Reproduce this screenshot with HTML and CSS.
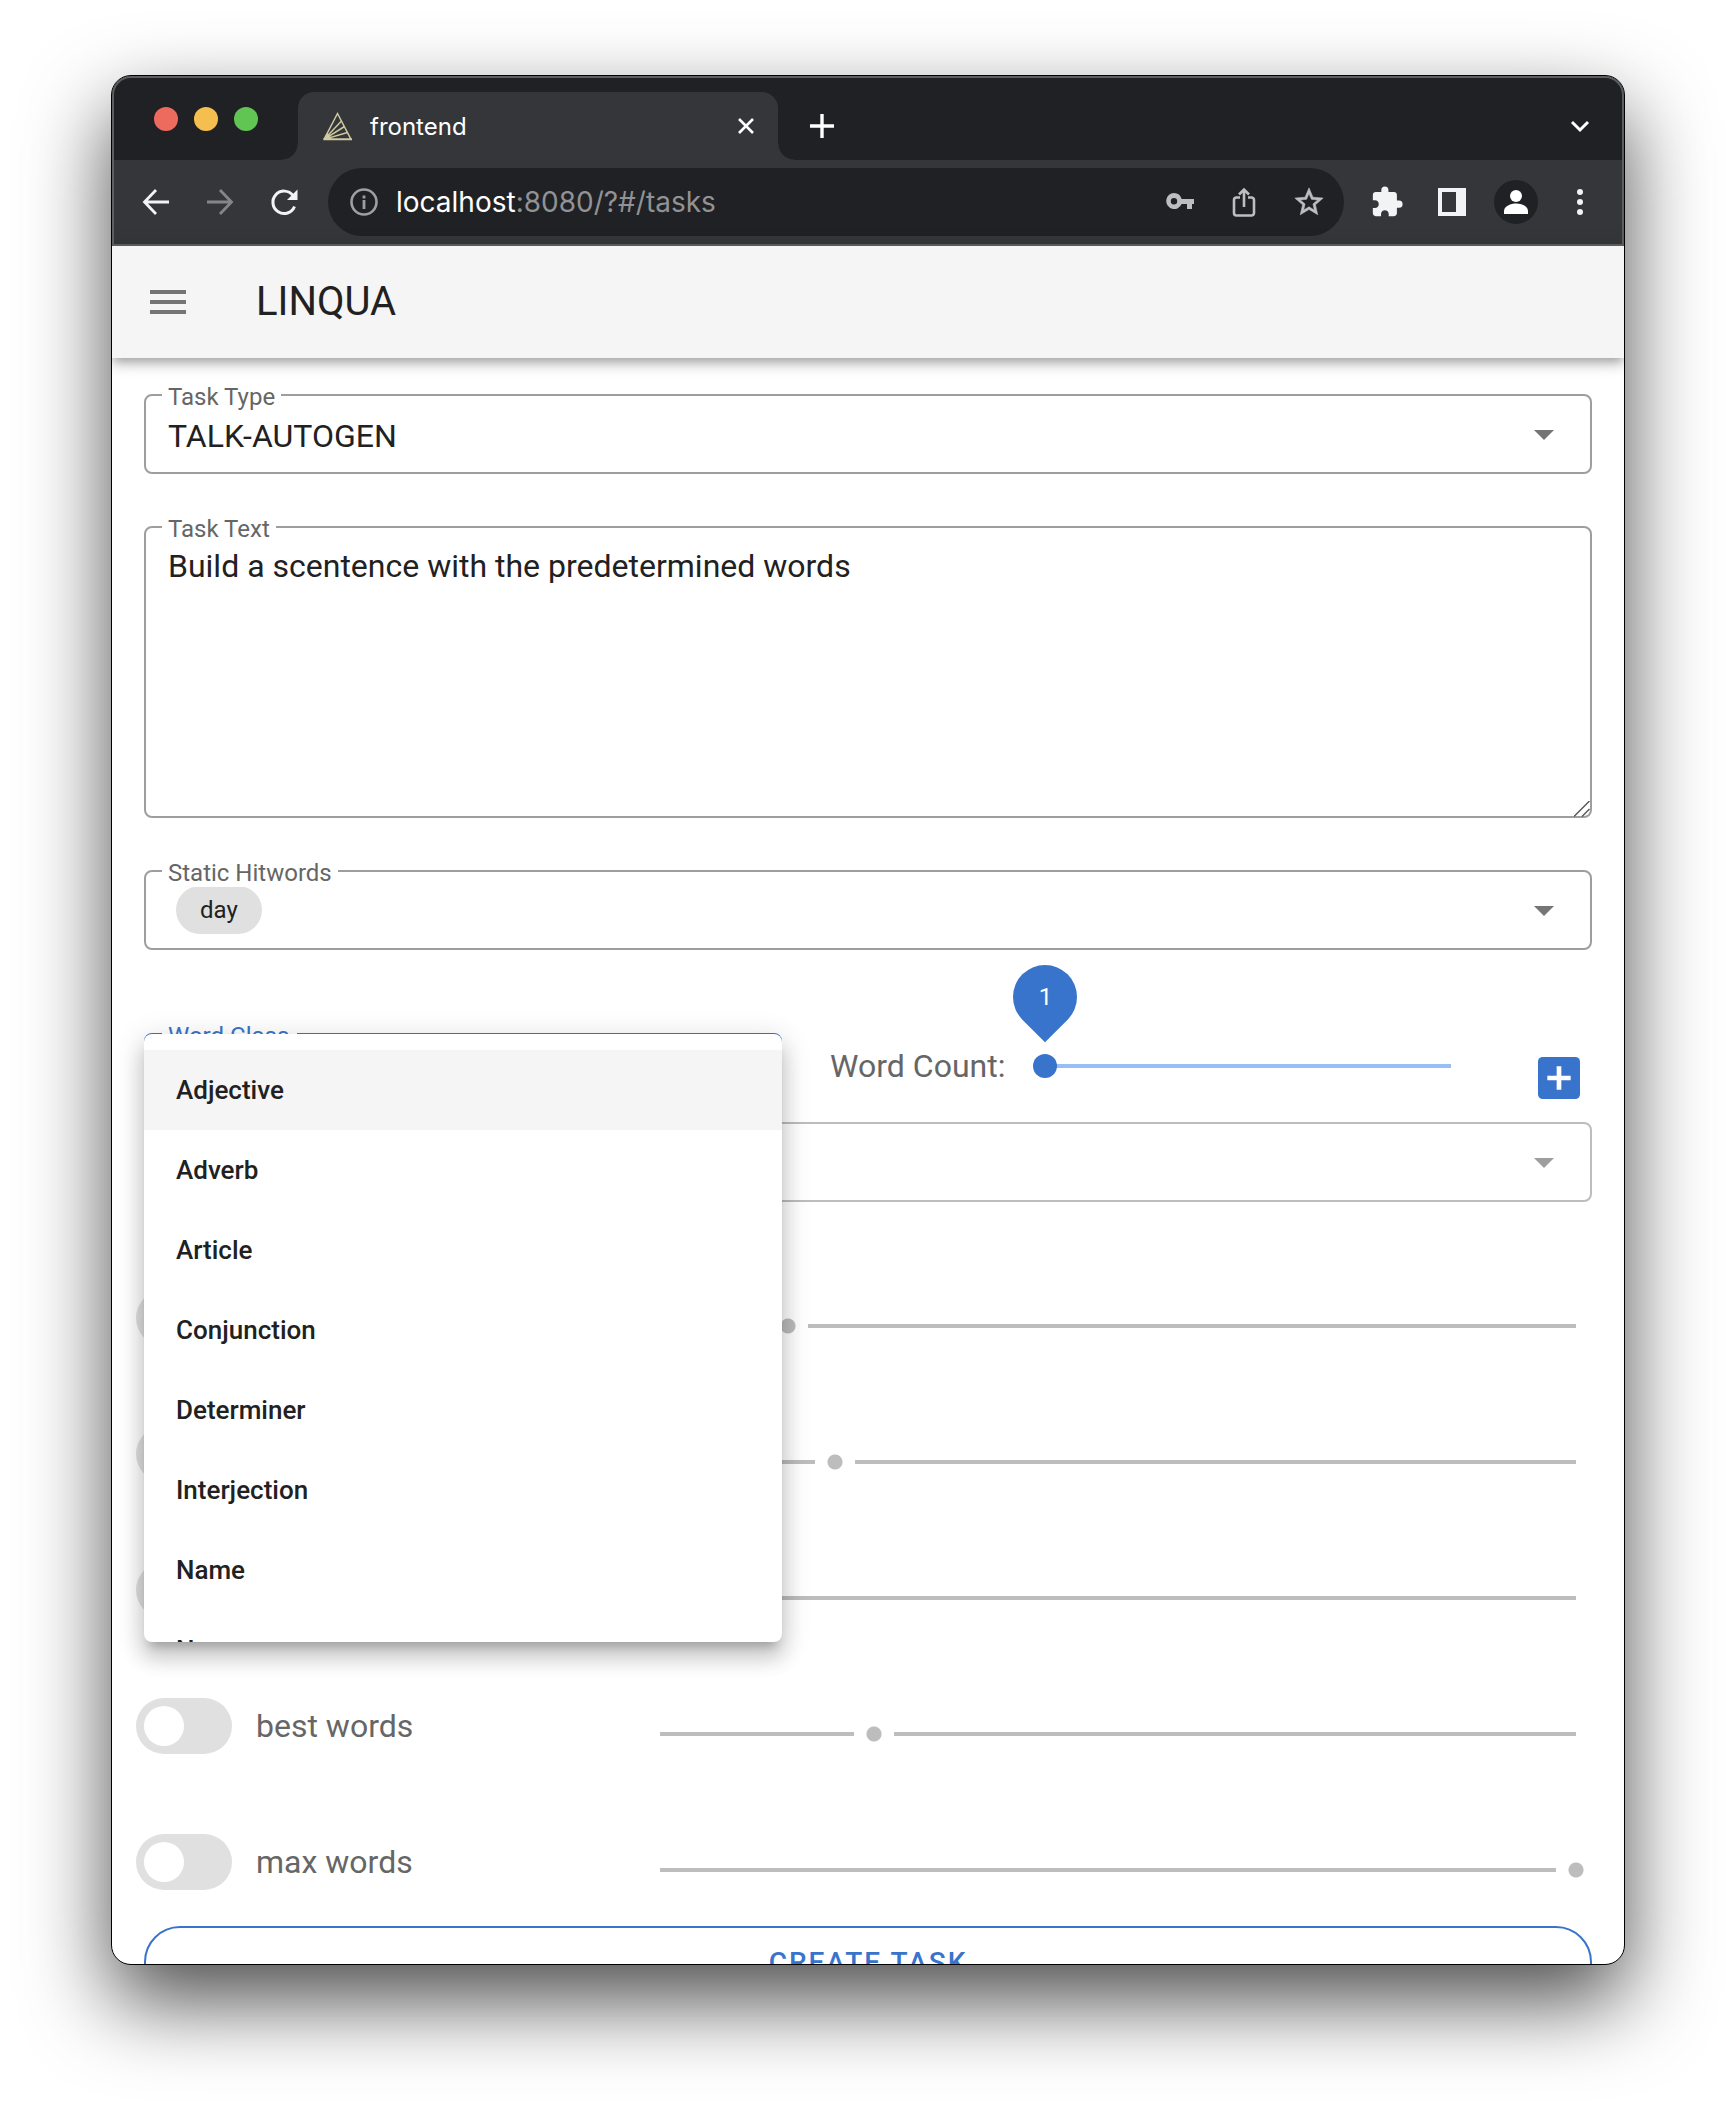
FILE: index.html
```html
<!DOCTYPE html>
<html lang="en">
<head>
<meta charset="utf-8">
<title>frontend</title>
<link rel="stylesheet" href="styles.css">
</head>
<body>
<div class="window">
  <header class="chrome">
    <div class="tabstrip">
      <div class="lights">
        <span class="light light-close"></span>
        <span class="light light-min"></span>
        <span class="light light-max"></span>
      </div>
      <div class="tab">
        <svg class="favicon" viewBox="0 0 32 32" aria-hidden="true"><g fill="none" stroke="#cfc8a0" stroke-width="1.5"><path d="M2 29.400 15.500 3.500 29 29.400"/><path d="M2 29.400 19.500 11M2 29.400 22.500 16.500M2 29.400 25.500 22.500"/><path d="M1.500 29.200h28.500" stroke-width="2"/></g><path d="M1.500 30 5.500 23 9 27.500 9 30Z" fill="#cfc8a0"/></svg>
        <span class="tab-title">frontend</span>
        <button class="icon-btn" aria-label="Close tab"><svg width="24" height="24" viewBox="0 0 24 24"><path d="m5 5 14 14M19 5 5 19" fill="none" stroke="#fff" stroke-width="2.6"/></svg></button>
      </div>
      <button class="icon-btn new-tab" aria-label="New tab"><svg width="28" height="28" viewBox="0 0 28 28"><path d="M14 2v24M2 14h24" fill="none" stroke="#fff" stroke-width="3.4"/></svg></button>
      <button class="icon-btn tab-search" aria-label="Search tabs"><svg width="24" height="24" viewBox="0 0 24 24"><path d="m4 8 8 8 8-8" fill="none" stroke="#fff" stroke-width="3"/></svg></button>
    </div>
    <div class="toolbar">
      <button class="icon-btn" aria-label="Back"><svg width="32" height="32" viewBox="0 0 32 32"><path d="M29 16H5M16 4 4.500 16 16 28" fill="none" stroke="#f1f3f4" stroke-width="2.800"/></svg></button>
      <button class="icon-btn" aria-label="Forward"><svg width="32" height="32" viewBox="0 0 32 32"><path d="M3 16h24M16 4l11.500 12L16 28" fill="none" stroke="#85868a" stroke-width="2.800"/></svg></button>
      <button class="icon-btn" aria-label="Reload"><svg width="32" height="32" viewBox="0 0 32 32"><path d="M26.500 20.500A11.200 11.200 0 1 1 25 9.500" fill="none" stroke="#f1f3f4" stroke-width="3"/><path d="M29.500 3.500V14H19Z" fill="#f1f3f4"/></svg></button>
      <div class="omnibox">
        <svg class="info" width="32" height="32" viewBox="0 0 32 32" aria-hidden="true"><circle cx="16" cy="16" r="12.500" fill="none" stroke="#9aa0a6" stroke-width="2.600"/><path d="M16 14v9M16 9.500v3" stroke="#9aa0a6" stroke-width="2.800"/></svg>
        <span class="url"><span class="host">localhost</span>:8080/?#/tasks</span>
        <button class="icon-btn" aria-label="Passwords"><svg width="32" height="32" viewBox="0 0 32 32"><path fill="#bdbebf" fill-rule="evenodd" d="M10 7a8 8 0 1 0 7.600 11H23v5h5v-5h2v-5H17.600A8 8 0 0 0 10 7Zm0 5a3.200 3.200 0 1 1 0 6.400 3.200 3.200 0 0 1 0-6.400Z"/></svg></button>
        <button class="icon-btn" aria-label="Share"><svg width="32" height="32" viewBox="0 0 32 32"><path fill="none" stroke="#bdbebf" stroke-width="2.600" d="M12 11.500H8.500a2.500 2.500 0 0 0-2.500 2.500v13a2.500 2.500 0 0 0 2.500 2.500h15a2.500 2.500 0 0 0 2.500-2.500V14a2.500 2.500 0 0 0-2.500-2.500H20M16 21V4M11 8.500l5-5 5 5"/></svg></button>
        <button class="icon-btn" aria-label="Bookmark"><svg width="34" height="34" viewBox="0 0 24 24"><path fill="#bdbebf" stroke="#bdbebf" stroke-width="0.400" d="m22 9.240-7.190-.62L12 2 9.190 8.630 2 9.240l5.460 4.730L5.820 21 12 17.270 18.180 21l-1.630-7.030zM12 15.400l-3.760 2.270 1-4.280-3.320-2.880 4.380-.38L12 6.100l1.710 4.040 4.380.38-3.320 2.880 1 4.280z"/></svg></button>
      </div>
      <button class="icon-btn" aria-label="Extensions"><svg width="34" height="34" viewBox="0 0 24 24"><path fill="#f1f3f4" d="M20.500 11H19V7c0-1.100-.9-2-2-2h-4V3.500a2.500 2.500 0 0 0-5 0V5H4c-1.100 0-1.990.9-1.990 2v3.800H3.500c1.490 0 2.700 1.210 2.700 2.700s-1.210 2.700-2.700 2.700H2V20c0 1.100.9 2 2 2h3.800v-1.500c0-1.490 1.210-2.700 2.700-2.700s2.700 1.210 2.700 2.700V22H17c1.100 0 2-.9 2-2v-4h1.500a2.500 2.500 0 0 0 0-5"/></svg></button>
      <button class="icon-btn" aria-label="Side panel"><svg width="32" height="32" viewBox="0 0 32 32"><path fill="#f1f3f4" fill-rule="evenodd" d="M2 2h28v28H2ZM6 6v20h14V6Z"/></svg></button>
      <button class="icon-btn profile" aria-label="Profile"><svg width="44" height="44" viewBox="0 0 44 44"><circle cx="22" cy="22" r="22" fill="#202124"/><circle cx="22" cy="16" r="6" fill="#fff"/><path d="M10 34v-3c0-5 7-7.500 12-7.500S34 26 34 31v3Z" fill="#fff"/></svg></button>
      <button class="icon-btn" aria-label="Menu"><svg width="32" height="32" viewBox="0 0 32 32"><g fill="#f1f3f4"><circle cx="16" cy="6" r="3"/><circle cx="16" cy="16" r="3"/><circle cx="16" cy="26" r="3"/></g></svg></button>
    </div>
  </header>

  <div class="appbar">
    <button class="icon-btn nav-btn" aria-label="Open navigation"><svg width="48" height="48" viewBox="0 0 24 24"><path fill="#757575" d="M3 6h18v2H3zm0 5h18v2H3zm0 5h18v2H3z"/></svg></button>
    <h1 class="app-title">LINQUA</h1>
  </div>

  <main class="page">
    <form class="form">
      <div class="field">
        <label class="field-label" for="task-type">Task Type</label>
        <select class="control" id="task-type"><option>TALK-AUTOGEN</option></select>
        <span class="caret"></span>
      </div>

      <div class="field">
        <label class="field-label" for="task-text">Task Text</label>
        <textarea class="control control-area" id="task-text">Build a scentence with the predetermined words</textarea>
        <svg class="grip" viewBox="0 0 16 16" aria-hidden="true"><path d="M0 15.500 15.500 0M8 15.500 15.500 8" fill="none" stroke="#555" stroke-width="1.400"/></svg>
      </div>

      <div class="field">
        <label class="field-label" for="hitwords">Static Hitwords</label>
        <div class="control control-chips">
          <span class="chip">day</span>
          <input class="chip-input" id="hitwords" type="text">
        </div>
        <span class="caret"></span>
      </div>

      <div class="word-row">
        <div class="field field-active">
          <label class="field-label" for="word-class">Word Class</label>
          <select class="control" id="word-class"></select>
          <ul class="menu" role="listbox" aria-label="Word Class">
            <li class="option option-hover" role="option">Adjective</li>
            <li class="option" role="option">Adverb</li>
            <li class="option" role="option">Article</li>
            <li class="option" role="option">Conjunction</li>
            <li class="option" role="option">Determiner</li>
            <li class="option" role="option">Interjection</li>
            <li class="option" role="option">Name</li>
            <li class="option" role="option">Noun</li>
          </ul>
        </div>
        <div class="count">
          <label class="text" for="word-count">Word Count:</label>
          <div class="count-slider">
            <input class="range" id="word-count" type="range" min="1" max="10" value="1">
            <output class="pin" for="word-count"><span class="pin-value">1</span></output>
          </div>
        </div>
        <button class="icon-btn add-btn" type="button" aria-label="Add word class"><svg width="56" height="56" viewBox="0 0 24 24"><rect x="3" y="3" width="18" height="18" rx="2" fill="#3874cb"/><path d="M12 7v10M7 12h10" stroke="#fff" stroke-width="2"/></svg></button>
      </div>

      <div class="field field-disabled">
        <select class="control" id="dynamic-words" aria-label="Dynamic words" disabled></select>
        <span class="caret"></span>
      </div>

      <div class="limits">
        <div class="limit">
          <input class="switch" type="checkbox" aria-label="Enable first limit">
          <input class="range range-off" type="range" min="0" max="1000" value="140" disabled aria-label="First limit">
        </div>
        <div class="limit">
          <input class="switch" type="checkbox" aria-label="Enable second limit">
          <input class="range range-off" type="range" min="0" max="1000" value="191" disabled aria-label="Second limit">
        </div>
        <div class="limit">
          <input class="switch" type="checkbox" aria-label="Enable third limit">
          <input class="range range-off" type="range" min="0" max="1000" value="50" disabled aria-label="Third limit">
        </div>
        <div class="limit">
          <label class="text switch-label"><input class="switch" type="checkbox">best words</label>
          <input class="range range-off" type="range" min="0" max="1000" value="234" disabled aria-label="best words">
        </div>
        <div class="limit">
          <label class="text switch-label"><input class="switch" type="checkbox">max words</label>
          <input class="range range-off" type="range" min="0" max="1000" value="1000" disabled aria-label="max words">
        </div>
      </div>

      <button class="submit" type="button">CREATE TASK</button>
    </form>
  </main>
</div>
</body>
</html>
```

FILE: styles.css
```css
:root {
  --primary: #3874cb;
  --ink: #212121;
  --muted: #666;
  --line: #9e9e9e;
  --off: #bdbdbd;
}

* {
  box-sizing: border-box;
}

body {
  margin: 0;
  height: 100vh;
  padding: 75px 111px 147px;
  display: flex;
  background: #fff;
  color: var(--ink);
  font-family: Roboto, "Liberation Sans", sans-serif;
  font-size: 32px;
  overflow: hidden;
}

button,
select,
textarea,
input {
  margin: 0;
  font: inherit;
  color: inherit;
}

.window {
  flex: 1;
  min-width: 0;
  display: flex;
  flex-direction: column;
  border: 1px solid #000;
  border-radius: 20px;
  background: #fff;
  overflow: hidden;
  box-shadow: 0 36px 84px rgba(0, 0, 0, 0.7);
}

/* Browser chrome */

.chrome {
  position: relative;
  flex: none;
  background: #35363a;
  border-bottom: 2px solid #5f6164;
  font-family: Inter, "Liberation Sans", sans-serif;
}

.chrome::after {
  content: "";
  position: absolute;
  inset: 0 0 -2px;
  border: solid #5c5e60;
  border-width: 2px 2px 0;
  border-radius: 19px 19px 0 0;
  pointer-events: none;
}

.icon-btn {
  display: flex;
  align-items: center;
  justify-content: center;
  flex: none;
  padding: 0;
  border: 0;
  background: none;
}

.tabstrip {
  display: flex;
  align-items: center;
  height: 84px;
  padding: 16px 32px 0 42px;
  background: #202124;
}

.lights {
  display: flex;
  gap: 16px;
  margin-right: 40px;
  padding-bottom: 14px;
}

.light {
  width: 24px;
  height: 24px;
  border-radius: 50%;
}

.light-close { background: #ed6a5e; }
.light-min { background: #f5bf4f; }
.light-max { background: #61c554; }

.tab {
  position: relative;
  display: flex;
  align-items: center;
  width: 480px;
  height: 68px;
  padding: 0 20px 0 24px;
  border-radius: 16px 16px 0 0;
  background: #35363a;
}

.tab::before,
.tab::after {
  content: "";
  position: absolute;
  bottom: 0;
  width: 16px;
  height: 16px;
}

.tab::before {
  right: 100%;
  background: radial-gradient(circle at 0 0, transparent 15px, #35363a 16px);
}

.tab::after {
  left: 100%;
  background: radial-gradient(circle at 100% 0, transparent 15px, #35363a 16px);
}

.favicon {
  width: 32px;
  height: 32px;
  margin-right: 16px;
}

.tab-title {
  flex: 1;
  color: #fff;
  font-size: 24px;
}

.new-tab {
  margin-left: 30px;
}

.tab-search {
  margin-left: auto;
}

.toolbar {
  display: flex;
  align-items: center;
  gap: 32px;
  height: 84px;
  padding: 0 28px;
}

.omnibox {
  flex: 1;
  display: flex;
  align-items: center;
  gap: 32px;
  height: 68px;
  margin: 0 -6px 0 -4px;
  padding: 0 18px 0 20px;
  border-radius: 34px;
  background: #202124;
}

.info {
  margin-right: -16px;
}

.url {
  flex: 1;
  color: #919295;
  font-size: 28px;
}

.host {
  color: #fff;
}

.profile {
  margin: 0 -6px;
}

/* Application */

.appbar {
  position: relative;
  z-index: 1;
  flex: none;
  display: flex;
  align-items: center;
  gap: 64px;
  height: 112px;
  padding: 0 32px;
  background: #f5f5f5;
  box-shadow: 0 4px 8px -2px rgba(0, 0, 0, 0.2), 0 8px 10px rgba(0, 0, 0, 0.14), 0 2px 20px rgba(0, 0, 0, 0.12);
}

.app-title {
  margin: 0;
  font-size: 40px;
  font-weight: 400;
  line-height: 56px;
}

.page {
  flex: 1;
  min-height: 0;
  overflow: hidden;
  padding: 36px 32px;
}

.form {
  display: flex;
  flex-direction: column;
}

.field {
  position: relative;
  margin-bottom: 52px;
}

.field-label {
  position: absolute;
  z-index: 1;
  top: -11px;
  left: 18px;
  padding: 0 6px;
  background: #fff;
  color: var(--muted);
  font-size: 24px;
  line-height: 28px;
}

.control {
  display: block;
  width: 100%;
  height: 80px;
  padding: 4px 22px 0;
  border: 2px solid var(--line);
  border-radius: 8px;
  background: #fff;
  outline: 0;
  appearance: none;
}

.control-area {
  height: 292px;
  padding-top: 18px;
  line-height: 40px;
  resize: none;
}

.grip {
  position: absolute;
  right: 2px;
  bottom: 1px;
  width: 16px;
  height: 16px;
}

.control-chips {
  display: flex;
  align-items: flex-start;
  padding: 14px 80px 0 30px;
}

.chip {
  padding: 0 24px;
  border-radius: 24px;
  background: #e0e0e0;
  font-size: 24px;
  line-height: 48px;
}

.chip-input {
  flex: 1;
  min-width: 0;
  height: 48px;
  border: 0;
  outline: 0;
  background: none;
}

.caret {
  position: absolute;
  top: 36px;
  right: 38px;
  width: 20px;
  height: 10px;
  background: #757575;
  clip-path: polygon(0 0, 100% 0, 50% 100%);
  pointer-events: none;
}

.word-row {
  display: flex;
  align-items: flex-start;
  margin: 31px 0 9px;
}

.field-active {
  width: calc(44% + 1px);
  margin: 0;
}

.field-active .control {
  border-color: var(--primary);
}

.field-active .field-label {
  padding-right: 8px;
  color: var(--primary);
}

.menu {
  position: absolute;
  z-index: 2;
  top: 1px;
  left: 0;
  width: 100%;
  height: 608px;
  margin: 0;
  padding: 16px 0;
  border-radius: 8px;
  background: #fff;
  list-style: none;
  overflow: hidden;
  box-shadow: 0 10px 10px -6px rgba(0, 0, 0, 0.2), 0 16px 20px 2px rgba(0, 0, 0, 0.14), 0 6px 28px 4px rgba(0, 0, 0, 0.12);
}

.option {
  padding: 0 32px;
  font-size: 26px;
  font-weight: 500;
  line-height: 80px;
}

.option-hover {
  background: #f5f5f5;
}

.count {
  flex: 1;
  display: flex;
  align-items: center;
  gap: 28px;
  height: 66px;
  margin: 0 68px 0 48px;
}

.text {
  color: var(--muted);
}

.count-slider {
  position: relative;
  flex: 1;
  height: 24px;
}

.range {
  display: block;
  width: 100%;
  height: 24px;
  background: linear-gradient(#97bff5, #97bff5) center / calc(100% - 24px) 4px no-repeat;
  appearance: none;
}

.range::-webkit-slider-thumb {
  width: 24px;
  height: 24px;
  border-radius: 50%;
  background: var(--primary);
  appearance: none;
}

.pin {
  position: absolute;
  bottom: calc(100% + 25px);
  left: -20px;
  display: flex;
  align-items: center;
  justify-content: center;
  width: 64px;
  height: 64px;
  color: #fff;
  font-size: 24px;
}

.pin::before {
  content: "";
  position: absolute;
  inset: 0;
  border-radius: 50% 50% 0;
  background: var(--primary);
  transform: rotate(45deg);
}

.pin-value {
  position: relative;
}

.add-btn {
  margin: 17px 5px 0 0;
}

.field-disabled .control {
  border-color: var(--off);
  opacity: 1;
}

.field-disabled .caret {
  background: #9e9e9e;
}

.limits {
  display: grid;
  gap: 80px;
  margin: 36px -4px 36px -8px;
}

.limit {
  display: grid;
  grid-template-columns: 504px 1fr;
  align-items: end;
}

.switch-label {
  display: flex;
  align-items: center;
  gap: 24px;
}

.switch {
  width: 96px;
  height: 56px;
  padding: 8px;
  border-radius: 28px;
  background: #e0e0e0;
  appearance: none;
}

.switch::before {
  content: "";
  display: block;
  width: 40px;
  height: 40px;
  border-radius: 50%;
  background: #fff;
}

.range-off {
  height: 40px;
  background: linear-gradient(var(--off), var(--off)) center / calc(100% - 40px) 4px no-repeat;
}

.range-off::-webkit-slider-thumb {
  width: 40px;
  height: 16px;
  border-radius: 0;
  background: radial-gradient(circle, var(--off) 7px, #fff 8px);
}

.submit {
  height: 72px;
  border: 2px solid var(--primary);
  border-radius: 36px;
  background: none;
  color: var(--primary);
  font-size: 28px;
  font-weight: 500;
  letter-spacing: 2px;
}
```
